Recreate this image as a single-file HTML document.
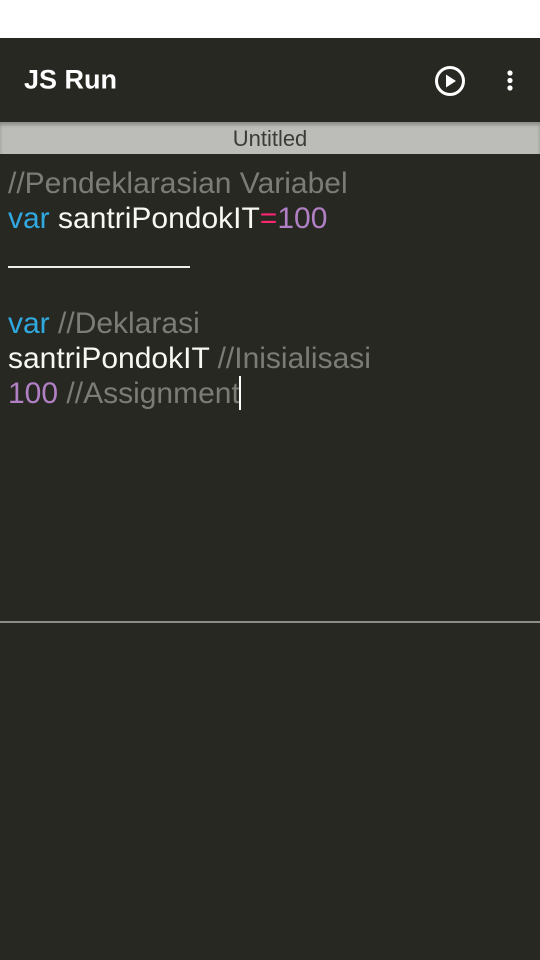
<!DOCTYPE html>
<html><head><meta charset="utf-8"><style>
body{margin:0;width:540px;height:960px;background:#272822;font-family:"Liberation Sans",sans-serif;position:relative;overflow:hidden}
.top{position:absolute;left:0;top:0;width:540px;height:38px;background:#fff}
.bar{position:absolute;left:0;top:38px;width:540px;height:84px;background:#272822}
.bar .t{position:absolute;left:24px;transform:translateY(-50%);color:#fff;font-size:27px;font-weight:bold}
.tab{position:absolute;left:0;top:122px;width:540px;height:32px;background:#bcbdb8;color:#3b3b38;font-size:22px;text-align:center;line-height:33px;box-shadow:inset 0 3px 3px rgba(0,0,0,.25)}
.code{position:absolute;left:8px;top:166px;font-size:30px;line-height:35px;color:#f8f8f2;white-space:pre}
.c{color:#7c7c76}.k{color:#2fa9e0}.n{color:#b07fc4}.o{color:#f92672}
.div{position:absolute;left:0;top:621px;width:540px;height:2px;background:#8c8c88}
.cur{display:inline-block;width:2px;height:34px;background:#fff;vertical-align:-7px;margin-left:-1px}
</style></head><body>
<div class="top"></div>
<div class="bar"><div class="t" style="top:42px">JS Run</div>
<svg style="position:absolute;left:433px;top:26px" width="34" height="34" viewBox="0 0 34 34"><circle cx="17" cy="17" r="13.5" fill="none" stroke="#fff" stroke-width="3"/><path d="M13 10.5 L23 17 L13 23.5Z" fill="#fff"/></svg>
<svg style="position:absolute;left:505px;top:30px" width="10" height="26"><circle cx="5" cy="5" r="2.6" fill="#fff"/><circle cx="5" cy="12.5" r="2.6" fill="#fff"/><circle cx="5" cy="20" r="2.6" fill="#fff"/></svg>
</div>
<div class="tab">Untitled</div>
<div class="code"><span class="c">//Pendeklarasian Variabel</span>
<span class="k">var</span> santriPondokIT<span class="o">=</span><span class="n">100</span>
&nbsp;

<span class="k">var</span> <span class="c">//Deklarasi</span>
santriPondokIT <span class="c">//Inisialisasi</span>
<span class="n">100</span> <span class="c">//Assignment</span><span class="cur"></span></div>
<div style="position:absolute;left:8px;top:266px;width:182px;height:2px;background:#f0f0ea"></div>
<div class="div"></div>
</body></html>
